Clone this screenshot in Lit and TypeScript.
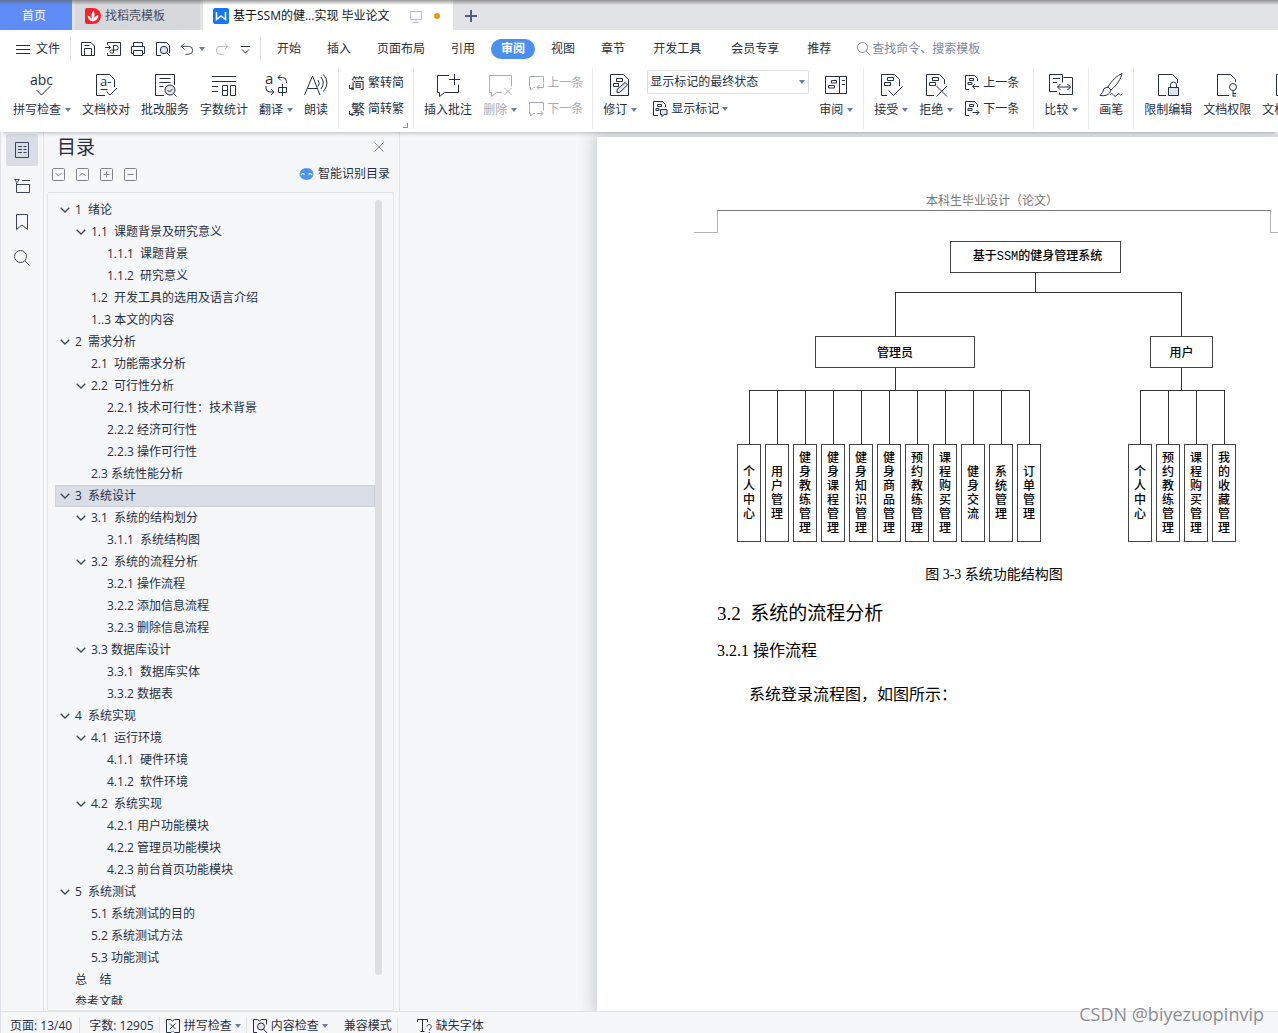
import { LitElement, html, svg, css, nothing, TemplateResult, SVGTemplateResult } from "lit";
import { customElement, property, state } from "lit/decorators.js";
import { classMap } from "lit/directives/class-map.js";

const icons: Record<string, SVGTemplateResult> = {
  // 16px icons
  menu: svg`<path d="M1 4.500h14M1 8.500h14M1 12.500h14"/>`,
  save: svg`<path d="M1.500 1.500h9.500l3.500 3.500v9.500h-13zM4.500 14.500v-7h7v7M4.500 4.500h5"/>`,
  exportPdf: svg`<path d="M2.500 4V1.500h13v13h-13V12M0 6.500h5.500M3.500 4.500l2 2l-2 2M8.500 12V4.500h2.500a2.200 2.200 0 0 1 0 4.500h-4.500a1.500 1.500 0 0 0 0 3h2"/>`,
  print: svg`<path d="M3.500 5V1.500h9V5M3.500 12.500h-2v-7h13v7h-2M3.500 9.500h9v5h-9z"/>`,
  preview: svg`<path d="M6 14.500H1.500v-13h10l3 3V12"/><circle cx="9" cy="9" r="3.700" fill="#dfe3ea"/><path d="M11.700 11.700L15 15"/>`,
  undo: svg`<path d="M5 1.500l-3.500 3.500L5 8.500M1.500 5h8.500a4.500 4.500 0 0 1 0 9H6"/>`,
  redo: svg`<path d="M11 1.500l3.500 3.500L11 8.500M14.500 5H6a4.500 4.500 0 0 0 0 9h4"/>`,
  more: svg`<path d="M3 5.500h9M4 8.500l3.500 3.500l3.500-3.500"/>`,
  search: svg`<circle cx="6.500" cy="6.500" r="5"/><path d="M10 10l4.500 4.500"/>`,
  screen: svg`<path d="M2.500 3.500h11v8h-11zM8 11.500v3M5 14.500h6"/>`,
  plus: svg`<path d="M8 2v12M2 8h12" stroke-width="2"/>`,
  close: svg`<path d="M3.500 3.500l9 9M12.500 3.500l-9 9"/>`,
  toSimple: svg`<text x="2" y="13" font-size="14">简</text><path d="M.5 10v3.500h3.500M2.500 12l1.500 1.500L2.500 15"/>`,
  toTrad: svg`<text x="2" y="13" font-size="14">繁</text><path d="M.5 10v3.500h3.500M2.500 12l1.500 1.500L2.500 15"/>`,
  prevNote: svg`<path d="M7 12.500H5.500l-3 2.500v-2.500h-1v-11h14v6M15.500 8.500v4H9M11.500 10L9 12.500l2.500 2.500"/>`,
  nextNote: svg`<path d="M7 12.500H5.500l-3 2.500v-2.500h-1v-11h14v8M9 12.500h6M12.500 10l2.500 2.500l-2.500 2.500"/>`,
  prevChange: svg`<path d="M5 14.500H1.500v-14h9l3 3V6M5.500 3.500h4v2h-4zM4 7.500h4v2H4zM8.500 11.500h6.500M11 9l-2.500 2.500L11 14"/>`,
  nextChange: svg`<path d="M5 14.500H1.500v-14h9l3 3V6M5.500 3.500h4v2h-4zM4 7.500h4v2H4zM8.500 11.500h6.500M12.500 9l2.500 2.500l-2.500 2.500"/>`,
  showMarks: svg`<path d="M6 14.500H1.500v-14h9l3 3V6M5.500 3.500h4v2h-4zM4 7.500h3v2H4z"/><path d="M8.500 8.500h6.500v5h-3l-2 2v-2H8.500z" fill="#dfe3ea"/>`,
  outline: svg`<path d="M1.500 .5h13v15h-13zM4 4.500h4M9.500 4.500h3M4 7.500h4M9.500 7.500h3M4 10.500h4M9.500 10.500h3"/>`,
  chapters: svg`<path d="M.5 1.500h5l-2.500 3zM8 2.500h8M2.500 4.500v10h13v-8h-13"/>`,
  bookmark: svg`<path d="M2.500 .5h11v15L8 11l-5.500 4.500z"/>`,
  find: svg`<circle cx="6.500" cy="6.500" r="6"/><path d="M11 11l4.500 4.500"/>`,
  spell: svg`<path d="M7 13.500l-1 1H1.500v-13h4l2 1.500l2-1.500h5v13H9.500l-1-1M5 5.500l5.500 5.500M10.500 5.500L5 11"/>`,
  content: svg`<path d="M5 14.500H1.500v-13h4l2 1.500l2-1.500h5v5"/><circle cx="9" cy="8.500" r="3.500" fill="#dfe3ea"/><path d="M11.500 11l3.500 4"/>`,
  missing: svg`<path d="M.5 4V1.500h10V4M5.500 1.500v12M3.500 13.500h4M10 8.500a2.200 2.200 0 1 1 3.500 2c-1 .7-1.200 1-1.200 2M12.300 14v1"/>`,
  // 24px icons
  abc: svg`<text x="0" y="12" font-size="14">abc</text><path d="M6.500 17l5 5l9-9"/>`,
  proof: svg`<path d="M11 22.500H2.500v-21h13l5 5V14M6.500 16.500h7M12.500 18.500l3.500 3.500l7-7"/><text x="6" y="13" font-size="13">a-</text>`,
  review: svg`<path d="M11 22.500H2.500v-21h19V12M6.500 5.500h11M6.500 9.500h11M6.500 13.500h4"/><circle cx="17" cy="17" r="5" fill="#dfe3ea"/><path d="M14.500 17l2 2l3-3M20.500 20.500l3 3"/>`,
  count: svg`<path d="M0 3.500h24M0 8.500h24M0 13.500h6M0 18.500h6M10.500 12.500h5v10h-5zM10.500 17.500h5M18.500 12.500h5v10h-5z"/>`,
  translate: svg`<text x="1" y="11" font-size="15">a</text><path d="M17 1.500l-3 3l3 3M14 4.500h4.500a4 4 0 0 1 4 4V10M2 13v2a4 4 0 0 0 4 4h3M7 16l3 3l-3 3M14.500 14.500h8v5h-8zM18.500 11v12"/>`,
  read: svg`<path d="M.5 22L8.500 3L16 22M3.500 15.500h10M14 7q2.500 3 0 6.500M17 4q4.500 5.500 0 12M19.500 1.500q7 8 0 17"/>`,
  addNote: svg`<path d="M13 2.500H1.500v17h2v4l5-4h14v-8M13 6.500h11M18.500 1v11"/>`,
  delNote: svg`<path d="M14 19.500H8.500l-5 4v-4h-2v-17h22v11M16.500 15l7 7M23.500 15l-7 7"/>`,
  revise: svg`<path d="M2.500 1.500h13l5 5v16h-18zM8.500 5.500h6v3h-6zM5.500 10.500h5v3h-5z"/><path d="M9 16.500l8-7l2.500 2.500l-8 7.500H9z" fill="#dfe3ea"/>`,
  pane: svg`<path d="M1.500 3.500h21v17h-21zM15.500 3.500v17M18 7.500h3M18 11.500h3M7.500 7.500h5v2.500h-5zM4.500 12.500h6v2.500h-6z"/>`,
  accept: svg`<path d="M8 22.500H2.500v-21h13l5 5V13M8.500 4.500h6v3h-6zM5.500 9.500h6v3h-6zM9.500 17.500l5 5l9-9"/>`,
  reject: svg`<path d="M10 22.500H2.500v-21h13l5 5V11M8.500 4.500h6v3h-6zM5.500 9.500h6v3h-6zM12.500 13l10.500 10.500M23 13L12.500 23.500"/>`,
  compare: svg`<path d="M8 18.500H.5v-17h13v8M14.500 4.500h9v17h-13v-2M4 5.500h7M4 9.500h4M8.500 14h13M11.500 11L8.500 14l3 3M18.500 11l3 3l-3 3"/>`,
  brush: svg`<path d="M9 14C13 7 18 3 23 .5C22 6 18 12 12 17zM9 14l-4 1.500Q4 20 1 22.500Q8 23.500 10.500 20L12 17zM11 22q2-3 3.500 0t3.500 0t3.500 0l2-1"/>`,
  lock: svg`<path d="M10 22.500H2.500v-21h14l5 5V10"/><path d="M12.500 14.500h10v8h-10z" fill="#dfe3ea"/><path d="M14.500 14v-2a3 3 0 0 1 6 0v2"/>`,
  key: svg`<path d="M14 22.500H2.500v-21h13l5 5V9M18 17.500v6M18 20.500h3M18 23h3"/><circle cx="18" cy="14" r="3.500"/>`,
  file: svg`<path d="M10 22.500H2.500v-21h14l4 5v16z"/>`,
};

@customElement("wps-icon")
class WpsIcon extends LitElement {
  static styles = css`
    :host { display: block; flex: none; }
    svg { display: block; fill: none; stroke: currentColor; overflow: visible; }
    text { fill: currentColor; stroke: none; font-family: "Open Sans", "Noto Sans CJK SC", sans-serif; }
  `;
  @property() name = "";
  @property({ type: Number }) size = 16;
  @property({ type: Number }) box = 0;
  render() {
    const b = this.box || this.size;
    return html`<svg width=${this.size} height=${this.size} viewBox="0 0 ${b} ${b}" aria-hidden="true">${icons[this.name]}</svg>`;
  }
}

interface Node { level: number; text: string; open?: boolean }
const n = (level: number, text: string, open = false): Node => ({ level, text, open });

const TREE: Node[] = [
  n(0, "1  绪论", true),
  n(1, "1.1  课题背景及研究意义", true),
  n(2, "1.1.1  课题背景"),
  n(2, "1.1.2  研究意义"),
  n(1, "1.2  开发工具的选用及语言介绍"),
  n(1, "1..3 本文的内容"),
  n(0, "2  需求分析", true),
  n(1, "2.1  功能需求分析"),
  n(1, "2.2  可行性分析", true),
  n(2, "2.2.1 技术可行性：技术背景"),
  n(2, "2.2.2 经济可行性"),
  n(2, "2.2.3 操作可行性"),
  n(1, "2.3 系统性能分析"),
  n(0, "3  系统设计", true),
  n(1, "3.1  系统的结构划分", true),
  n(2, "3.1.1  系统结构图"),
  n(1, "3.2  系统的流程分析", true),
  n(2, "3.2.1 操作流程"),
  n(2, "3.2.2 添加信息流程"),
  n(2, "3.2.3 删除信息流程"),
  n(1, "3.3 数据库设计", true),
  n(2, "3.3.1  数据库实体"),
  n(2, "3.3.2 数据表"),
  n(0, "4  系统实现", true),
  n(1, "4.1  运行环境", true),
  n(2, "4.1.1  硬件环境"),
  n(2, "4.1.2  软件环境"),
  n(1, "4.2  系统实现", true),
  n(2, "4.2.1 用户功能模块"),
  n(2, "4.2.2 管理员功能模块"),
  n(2, "4.2.3 前台首页功能模块"),
  n(0, "5  系统测试", true),
  n(1, "5.1 系统测试的目的"),
  n(1, "5.2 系统测试方法"),
  n(1, "5.3 功能测试"),
  n(0, "总    结"),
  n(0, "参考文献"),
];

const ADMIN = ["个人中心", "用户管理", "健身教练管理", "健身课程管理", "健身知识管理", "健身商品管理", "预约教练管理", "课程购买管理", "健身交流", "系统管理", "订单管理"];
const USER = ["个人中心", "预约教练管理", "课程购买管理", "我的收藏管理"];

@customElement("app-root")
class AppRoot extends LitElement {
  static styles = css`
    :host {
      display: flex; flex-direction: column; height: 100vh; overflow: hidden; position: relative;
      background: #f6f7f9; color: #262f42;
      font: 12px/18px "Open Sans", "Noto Sans CJK SC", sans-serif;
    }
    * { box-sizing: border-box; }
    button, select, input { font: inherit; color: inherit; background: none; border: 0; padding: 0; margin: 0; white-space: nowrap; }
    button { cursor: pointer; }
    ul { list-style: none; margin: 0; padding: 0; }
    .caret { width: 0; height: 0; flex: none; border: 3px solid transparent; border-top: 4px solid #6f7c95; border-bottom: 0; }

    .tabs { display: flex; height: 30px; flex: none; background: #e2e3e7; position: relative; }
    .tabs::after { content: ""; position: absolute; inset: 0 0 auto; height: 5px; pointer-events: none;
      background: linear-gradient(rgba(100, 100, 100, .65), rgba(130, 130, 130, 0)); }
    .tab { display: flex; align-items: center; height: 30px; line-height: 20px; padding-top: 1px; }
    .tab.home { width: 72px; justify-content: center; padding-right: 4px; background: #5f8df8; color: #fff; margin-right: 3px; }
    .tab.docer { width: 125px; background: #d6d8dc; gap: 4px; padding-left: 10px; margin-right: 3px; color: #454d5e; }
    .tab.active { width: 250px; background: #fff; gap: 4px; padding-left: 10px; color: #111; }
    .tab.add { width: 36px; justify-content: center; color: #4e5d7c; }
    .screen { margin-left: 14px; color: #b5bdcc; }
    .dot { width: 6px; height: 6px; border-radius: 50%; background: #e89b0c; margin-left: 6px; }

    .menu { display: flex; align-items: center; height: 36px; flex: none; background: #fff; padding: 2px 0 0 15px; line-height: 20px; }
    .file { display: flex; align-items: center; gap: 5px; }
    .quick { display: flex; align-items: center; padding: 0 6px 0 9px; margin-left: 10px; border-left: 1px solid #dfe2e8; border-right: 1px solid #dfe2e8; height: 24px; gap: 9px; }
    .quick .undo { display: flex; align-items: center; gap: 5px; margin-right: 1px; }
    .dim { color: #a9adb5; }
    .nav { display: flex; gap: 6px; margin-left: 6px; }
    .nav button { height: 20px; line-height: 20px; padding: 0 10px; border-radius: 10px; }
    .nav .wide { padding: 0 12px; }
    .nav .on { background: #4a90f0; color: #fff; font-weight: 700; }
    .search { display: flex; align-items: center; margin-left: 15px; color: #8c96a8; }
    .search input { width: 160px; outline: 0; }
    .search input::placeholder { color: #7c879b; opacity: 1; }

    .ribbon { display: flex; height: 66px; background: #fff; padding: 2px 0 3px 3px; overflow: hidden; }
    .ribbon-wrap { flex: none; position: relative; z-index: 2; box-shadow: 0 4px 4px -3px rgba(60, 64, 72, .35); }
    .group { display: flex; gap: 11px; align-items: flex-start; padding: 5px 10px 0; border-right: 1px solid #e9ebef; flex: none; position: relative; }
    .group.tight { padding-right: 9px; }
    .group.close { gap: 10px; }
    .big { display: flex; flex-direction: column; align-items: center; gap: 4px; }
    .label { display: flex; align-items: center; gap: 4px; }
    .pair { display: flex; flex-direction: column; gap: 8px; padding-top: 1px; }
    .pair.wide { padding-right: 4px; }
    .small { display: flex; align-items: center; gap: 3px; height: 18px; }
    .stack { display: flex; flex-direction: column; gap: 6px; margin-top: -3px; }
    .stack .small { padding-left: 5px; }
    .pick { position: relative; display: flex; align-items: center; }
    .pick select { appearance: none; width: 162px; height: 24px; border: 1px solid #dcdfe5; border-radius: 2px; padding: 0 2px; background: #fff; }
    .pick .caret { position: absolute; right: 4px; pointer-events: none; }
    .corner { position: absolute; right: 5px; bottom: 1px; width: 5px; height: 5px; border: solid #8a93a5; border-width: 0 1px 1px 0; }

    .main { display: flex; flex: 1; min-height: 0; border-bottom: 1px solid #dfe1e6; }
    .rail { width: 44px; flex: none; border: solid #e1e3ea; border-width: 0 1px; display: flex; flex-direction: column; gap: 4px; padding: 2px 0 0 5px; }
    .rail button { width: 32px; height: 32px; display: grid; place-items: center; border-radius: 2px; color: #3b465c; }
    .rail .on { background: #d9dde5; }
    .panel { width: 356px; flex: none; border-right: 1px solid #e1e3ea; padding: 0 5px 0 3px; display: flex; flex-direction: column; }
    .head { display: flex; justify-content: space-between; align-items: center; height: 30px; padding: 0 7px 0 10px; }
    .head h2 { margin: 0; font-size: 19px; line-height: 24px; font-weight: 400; }
    .head button { color: #7d8798; }
    .tools { display: flex; align-items: center; height: 24px; padding: 0 4px 0 5px; gap: 11px; color: #7f8590; }
    .tools svg { display: block; }
    .tools .smart { display: flex; align-items: center; gap: 4px; margin-left: auto; color: #262f42; line-height: 20px; }
    .tree { flex: 1; min-height: 0; margin-top: 6px; border: 1px solid #e2e4ec; border-radius: 2px; padding: 6px 11px 5px 7px; display: flex; }
    .tree ul { flex: 1; overflow: hidden; }
    .row { display: flex; align-items: center; width: 100%; height: 22px; gap: 5px; text-align: left; white-space: pre; }
    .row.l0 { padding-left: 5px; }
    .row.l1 { padding-left: 21px; }
    .row.l2 { padding-left: 37px; }
    .row.on { background: #d9dde5; box-shadow: inset 0 0 0 1px #cbd0da; }
    .row svg, .blank { width: 10px; height: 6px; flex: none; }
    .bar { width: 7px; margin: 1px 0 30px; border-radius: 4px; background: #dcdee2; flex: none; }

    .doc { flex: 1; min-width: 0; overflow: hidden; padding: 5px 0 0 197px; background: #f6f7f9; display: flex; }
    .page { width: 794px; flex: none; background: #fff; padding: 56px 120px 0; color: #000; box-shadow: -1px 0 14px 3px rgba(80, 84, 92, .25);
      font-family: "Liberation Serif", "Noto Sans CJK SC", serif; }
    .running { text-align: center; color: #777; padding-right: 4px; line-height: 17px; }
    .crop { display: grid; grid-template-columns: 24px 1fr 24px; margin: 0 -23px; height: 23px; }
    .crop i:first-child { border: solid #b4b4b4; border-width: 0 1px 1px 0; }
    .crop i:nth-child(2) { border-top: 1px solid #777; margin: 0 -1px; }
    .crop i:last-child { border: solid #b4b4b4; border-width: 0 0 1px 1px; }
    .chart { position: relative; height: 312px; font: 500 12px/14px "Noto Sans CJK SC", sans-serif; }
    .chart svg { position: absolute; inset: 0; width: 100%; height: 100%; }
    .node { position: absolute; height: 32px; border: 1px solid #444; background: #fff; display: flex; justify-content: center; align-items: center; }
    .root { left: 233px; top: 8px; width: 171px; padding-left: 4px; font-family: "Liberation Mono", "Noto Sans CJK SC", monospace; }
    .admin { left: 98px; top: 103px; width: 160px; }
    .user { left: 433px; top: 103px; width: 63px; }
    .leaves { position: absolute; top: 211px; display: flex; gap: 4px; }
    .leaves.a { left: 20px; }
    .leaves.u { left: 411px; }
    .leaf { width: 24px; height: 98px; border: 1px solid #444; padding: 0 5px 2px; display: flex; align-items: center; word-break: break-all; background: #fff; }
    .caption { margin: 18px 0 0; font-size: 14px; line-height: 24px; text-align: center; }
    h3 { margin: 14px 0 0; font-size: 19px; line-height: 26px; font-weight: 400; white-space: pre; }
    h4 { margin: 12px 0 0; font-size: 16px; line-height: 24px; font-weight: 400; }
    .body { margin: 20px 0 0; padding-left: 32px; font-size: 16px; line-height: 24px; }

    .status { display: flex; height: 21px; flex: none; border-left: 1px solid #dfe1e6; padding-top: 5px; line-height: 20px; }
    .status > * { display: flex; align-items: center; gap: 3px; height: 18px; padding: 0 5px; border-right: 1px solid #dfe1e6; }
    .status .words { padding-left: 9px; }
    .status .pages { padding-right: 7px; }
    .status .plain { border-color: transparent; }
    .status .compat { padding-left: 10px; }
    .status .missing { padding-left: 19px; }
    .mark { position: absolute; right: 14px; bottom: 7px; font: 18px/24px "Open Sans", sans-serif; color: #8b8d91; text-shadow: 1px 1px 0 #fff; z-index: 3; }
  `;

  @state() private current = 13;
  @state() private tab = "审阅";

  private big(icon: string, label: string, caret = false, dim = false): TemplateResult {
    return html`<button class=${classMap({ big: true, dim })}>
      <wps-icon name=${icon} size="24"></wps-icon>
      <span class="label">${label}${caret ? html`<span class="caret"></span>` : nothing}</span>
    </button>`;
  }

  private small(icon: string, label: string, dim = false, caret = false): TemplateResult {
    return html`<button class=${classMap({ small: true, dim })}>
      <wps-icon name=${icon}></wps-icon>${label}${caret ? html`<span class="caret"></span>` : nothing}
    </button>`;
  }

  private toolIcon(d: string) {
    return html`<svg width="13" height="13" viewBox="0 0 13 13" fill="none" stroke="currentColor"><rect x=".5" y=".5" width="12" height="12" rx="1"/><path d=${d}/></svg>`;
  }

  private renderTabs() {
    return html`<div class="tabs">
      <button class="tab home">首页</button>
      <button class="tab docer">
        <svg width="16" height="16" viewBox="0 0 16 16"><path d="M2 0h6a8 8 0 0 1 0 16H2a2 2 0 0 1-2-2V2a2 2 0 0 1 2-2z" fill="#f5222d"/><path d="M7.500 13.500C5 13 2.800 10.500 2.500 7.500c2 .3 3.800 2 4.600 4.200C6 8 6.500 4.500 8.500 2.500c1.600 2.500 1.300 6-.2 9c1-2.500 2.700-4 5.200-4.500c-.3 3.500-2.500 6-6 6.500z" fill="#fff"/></svg>
        找稻壳模板
      </button>
      <button class="tab active">
        <svg width="16" height="16" viewBox="0 0 16 16"><rect width="16" height="16" rx="2" fill="#1677f5"/><path d="M3.500 4v7.500L8 8l4.500 3.500V4" fill="none" stroke="#fff" stroke-width="1.500"/></svg>
        基于SSM的健...实现 毕业论文
        <wps-icon class="screen" name="screen"></wps-icon><span class="dot"></span>
      </button>
      <button class="tab add" aria-label="新建标签"><wps-icon name="plus"></wps-icon></button>
    </div>`;
  }

  private renderMenu() {
    const items = ["开始", "插入", "页面布局", "引用", "审阅", "视图", "章节", "开发工具", "会员专享", "推荐"];
    return html`<div class="menu">
      <button class="file"><wps-icon name="menu"></wps-icon>文件</button>
      <div class="quick">
        <button aria-label="保存"><wps-icon name="save"></wps-icon></button>
        <button aria-label="输出为PDF"><wps-icon name="exportPdf"></wps-icon></button>
        <button aria-label="打印"><wps-icon name="print"></wps-icon></button>
        <button aria-label="打印预览"><wps-icon name="preview"></wps-icon></button>
        <button class="undo" aria-label="撤销"><wps-icon name="undo" size="14" box="16"></wps-icon><span class="caret"></span></button>
        <button class="dim" aria-label="恢复"><wps-icon name="redo" size="14" box="16"></wps-icon></button>
        <button aria-label="更多"><wps-icon name="more"></wps-icon></button>
      </div>
      <nav class="nav">${items.map((t) => html`<button
        class=${classMap({ on: t === this.tab, wide: t === "开发工具" || t === "会员专享" })}
        @click=${() => (this.tab = t)}>${t}</button>`)}</nav>
      <label class="search"><wps-icon name="search"></wps-icon><input type="search" aria-label="查找" placeholder="查找命令、搜索模板" /></label>
    </div>`;
  }

  private renderRibbon() {
    return html`<div class="ribbon-wrap"><div class="ribbon">
      <div class="group">
        ${this.big("abc", "拼写检查", true)}${this.big("proof", "文档校对")}${this.big("review", "批改服务")}
        ${this.big("count", "字数统计")}${this.big("translate", "翻译", true)}${this.big("read", "朗读")}
      </div>
      <div class="group tight">
        <div class="pair">${this.small("toSimple", "繁转简")}${this.small("toTrad", "简转繁")}</div>
        <span class="corner"></span>
      </div>
      <div class="group tight">
        ${this.big("addNote", "插入批注")}${this.big("delNote", "删除", true, true)}
        <div class="pair">${this.small("prevNote", "上一条", true)}${this.small("nextNote", "下一条", true)}</div>
      </div>
      <div class="group close">
        ${this.big("revise", "修订", true)}
        <div class="stack">
          <div class="pick"><select aria-label="标记显示方式"><option>显示标记的最终状态</option></select><span class="caret"></span></div>
          ${this.small("showMarks", "显示标记", false, true)}
        </div>
        ${this.big("pane", "审阅", true)}
      </div>
      <div class="group">
        ${this.big("accept", "接受", true)}${this.big("reject", "拒绝", true)}
        <div class="pair wide">${this.small("prevChange", "上一条")}${this.small("nextChange", "下一条")}</div>
      </div>
      <div class="group">${this.big("compare", "比较", true)}</div>
      <div class="group">${this.big("brush", "画笔")}</div>
      <div class="group">${this.big("lock", "限制编辑")}${this.big("key", "文档权限")}${this.big("file", "文档认证")}</div>
    </div></div>`;
  }

  private renderPanel() {
    return html`<aside class="panel">
      <div class="head"><h2>目录</h2><button aria-label="关闭"><wps-icon name="close"></wps-icon></button></div>
      <div class="tools">
        <button aria-label="展开">${this.toolIcon("M3.500 5l3 3l3-3")}</button>
        <button aria-label="收起">${this.toolIcon("M3.500 8l3-3l3 3")}</button>
        <button aria-label="增加级别">${this.toolIcon("M3.500 6.500h6M6.500 3.500v6")}</button>
        <button aria-label="减少级别">${this.toolIcon("M3.500 6.500h6")}</button>
        <button class="smart">
          <svg width="15" height="12" viewBox="0 0 15 12"><ellipse cx="7.500" cy="6" rx="7" ry="6" fill="#4a94f2"/><path d="M2 7q1.500-2.500 3.500-.5M9.500 6.500q2-2 3.500.5" fill="none" stroke="#fff" stroke-width="1.300"/></svg>
          智能识别目录
        </button>
      </div>
      <div class="tree">
        <ul>${TREE.map((t, i) => html`<li><button
          class=${classMap({ row: true, on: i === this.current, [`l${t.level}`]: true })}
          @click=${() => (this.current = i)}>${t.open
            ? html`<svg viewBox="0 0 10 6" fill="none" stroke="#3c465a" stroke-width="1.300"><path d="M.7.700L5 5L9.300.700"/></svg>`
            : html`<span class="blank"></span>`}<span>${t.text}</span></button></li>`)}</ul>
        <div class="bar"></div>
      </div>
    </aside>`;
  }

  private renderChart() {
    const drops = [...ADMIN.map((_, i) => 32 + i * 28), ...USER.map((_, i) => 423 + i * 28)];
    return html`<div class="chart">
      <svg fill="none" stroke="#333" shape-rendering="crispEdges">
        <path d="M318.500 39v20M178.500 103v-43.500h286v43.500M178.500 134v23M464.500 134v23M32 157.500h281M423 157.500h85"/>
        ${drops.map((x) => svg`<path d="M${x}.5 157v54"/>`)}
      </svg>
      <div class="node root">基于SSM的健身管理系统</div>
      <div class="node admin">管理员</div>
      <div class="node user">用户</div>
      <div class="leaves a">${ADMIN.map((t) => html`<div class="leaf">${t}</div>`)}</div>
      <div class="leaves u">${USER.map((t) => html`<div class="leaf">${t}</div>`)}</div>
    </div>`;
  }

  render() {
    return html`
      ${this.renderTabs()}${this.renderMenu()}${this.renderRibbon()}
      <div class="main">
        <div class="rail">
          <button class="on" aria-label="目录"><wps-icon name="outline"></wps-icon></button>
          <button aria-label="章节"><wps-icon name="chapters"></wps-icon></button>
          <button aria-label="书签"><wps-icon name="bookmark"></wps-icon></button>
          <button aria-label="查找"><wps-icon name="find"></wps-icon></button>
        </div>
        ${this.renderPanel()}
        <div class="doc"><article class="page">
          <div class="running">本科生毕业设计（论文）</div>
          <div class="crop"><i></i><i></i><i></i></div>
          ${this.renderChart()}
          <p class="caption">图 3-3 系统功能结构图</p>
          <h3>3.2  系统的流程分析</h3>
          <h4>3.2.1 操作流程</h4>
          <p class="body">系统登录流程图，如图所示：</p>
        </article></div>
      </div>
      <footer class="status">
        <span class="words pages">页面: 13/40</span>
        <span class="words">字数: 12905</span>
        <button><wps-icon name="spell"></wps-icon>拼写检查<span class="caret"></span></button>
        <button class="plain"><wps-icon name="content"></wps-icon>内容检查<span class="caret"></span></button>
        <button class="compat">兼容模式</button>
        <button class="plain missing"><wps-icon name="missing"></wps-icon>缺失字体</button>
      </footer>
      <div class="mark">CSDN @biyezuopinvip</div>
    `;
  }
}
